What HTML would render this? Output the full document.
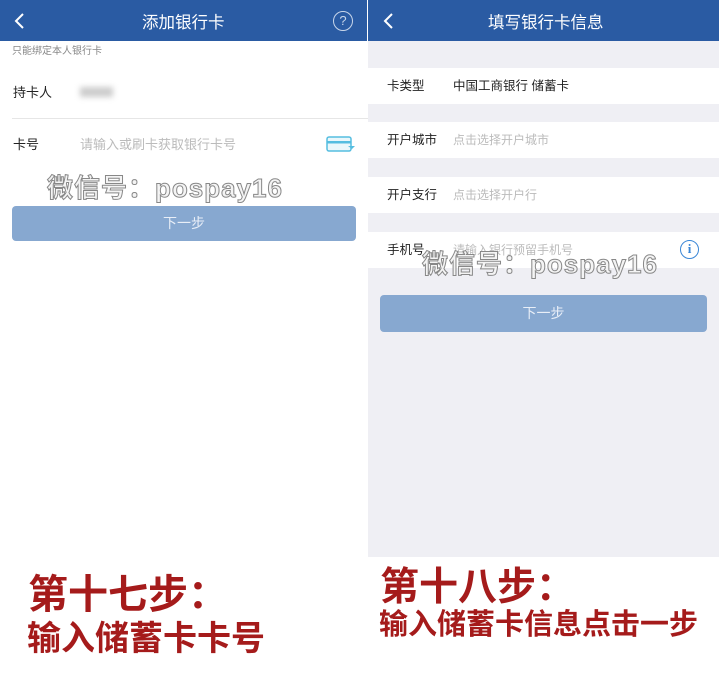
<!DOCTYPE html>
<html><head><meta charset="utf-8"><style>
*{margin:0;padding:0;box-sizing:border-box}
body{width:719px;height:674px;background:#fff;position:relative;overflow:hidden;font-family:"Liberation Sans","Noto Sans CJK SC",sans-serif;line-height:1}
.a{position:absolute;white-space:nowrap}
.hdr{background:#2a5ba3;height:41px;top:0}
.ht{color:#fff;font-size:16.5px;top:14px}
.btn{background:#87a8d0;color:#e8eef7;font-size:14px;text-align:center;border-radius:4px}
.row{background:#fff;height:36px;left:368px;width:351px}
.lb{font-size:12.5px;color:#222}
.ph{font-size:12px;color:#bbb}
.wm{font-size:26px;color:#f4f4f4;font-weight:bold;-webkit-text-stroke:1px #888;letter-spacing:1px}
.red{color:#a51b1b;font-weight:bold}
</style></head><body>
<!-- left -->
<div class="a hdr" style="left:0;width:367px"></div>
<svg class="a" style="left:13px;top:12px" width="12" height="18"><path d="M10 2 L3 9 L10 16" stroke="#fff" stroke-width="2" fill="none"/></svg>
<div class="a ht" style="left:142px;top:15px">添加银行卡</div>
<div class="a" style="left:333px;top:11px;width:20px;height:20px;border:1.3px solid #c8d6ea;border-radius:50%;color:#c8d6ea;font-size:13px;text-align:center;line-height:18px">?</div>
<div class="a" style="left:12px;top:47px;font-size:10px;color:#888">只能绑定本人银行卡</div>
<div class="a lb" style="left:13px;top:86px;font-size:13px">持卡人</div>
<div class="a" style="left:80px;top:87px;width:33px;height:10px;background:#ccc;filter:blur(3px)"></div>
<div class="a" style="left:12px;top:118px;width:356px;height:1px;background:#e6e6e6"></div>
<div class="a lb" style="left:13px;top:138px;font-size:13px">卡号</div>
<div class="a ph" style="left:80px;top:138px;font-size:13px">请输入或刷卡获取银行卡号</div>
<svg class="a" style="left:326px;top:136px" width="30" height="17"><rect x="1" y="1" width="24" height="14" rx="2" fill="#eaf7fb" stroke="#55bde0" stroke-width="1.5"/><rect x="1" y="5" width="24" height="2.5" fill="#55bde0"/><path d="M22 10 L29 10 L26 13 Z" fill="#55bde0"/></svg>
<div class="a wm" style="left:47px;top:175px">微信号：pospay16</div>
<div class="a btn" style="left:12px;top:206px;width:344px;height:35px;line-height:35px">下一步</div>
<div class="a red" style="left:28px;top:575px;font-size:40px">第十七步：</div>
<div class="a red" style="left:27px;top:622px;font-size:34px">输入储蓄卡卡号</div>
<!-- right -->
<div class="a hdr" style="left:368px;width:351px"></div>
<svg class="a" style="left:382px;top:12px" width="12" height="18"><path d="M10 2 L3 9 L10 16" stroke="#fff" stroke-width="2" fill="none"/></svg>
<div class="a ht" style="left:488px;top:15px">填写银行卡信息</div>
<div class="a" style="left:368px;top:41px;width:351px;height:516px;background:#efeff4"></div>
<div class="a row" style="top:68px"></div>
<div class="a row" style="top:122px"></div>
<div class="a row" style="top:177px"></div>
<div class="a row" style="top:232px"></div>
<div class="a lb" style="left:387px;top:80px">卡类型</div>
<div class="a lb" style="left:453px;top:80px">中国工商银行 储蓄卡</div>
<div class="a lb" style="left:387px;top:134px">开户城市</div>
<div class="a ph" style="left:453px;top:134px">点击选择开户城市</div>
<div class="a lb" style="left:387px;top:189px">开户支行</div>
<div class="a ph" style="left:453px;top:189px">点击选择开户行</div>
<div class="a lb" style="left:387px;top:244px">手机号</div>
<div class="a ph" style="left:453px;top:244px">请输入银行预留手机号</div>
<div class="a" style="left:680px;top:240px;width:19px;height:19px;border:1.5px solid #3a86d6;border-radius:50%;color:#3a86d6;font-size:13px;font-weight:bold;text-align:center;line-height:16px;font-family:'Liberation Serif',serif">i</div>
<div class="a wm" style="left:422px;top:251px">微信号：pospay16</div>
<div class="a btn" style="left:380px;top:295px;width:327px;height:37px;line-height:37px">下一步</div>
<div class="a red" style="left:380px;top:568px;font-size:39px">第十八步：</div>
<div class="a red" style="left:379px;top:611px;font-size:29px">输入储蓄卡信息点击一步</div>
</body></html>
